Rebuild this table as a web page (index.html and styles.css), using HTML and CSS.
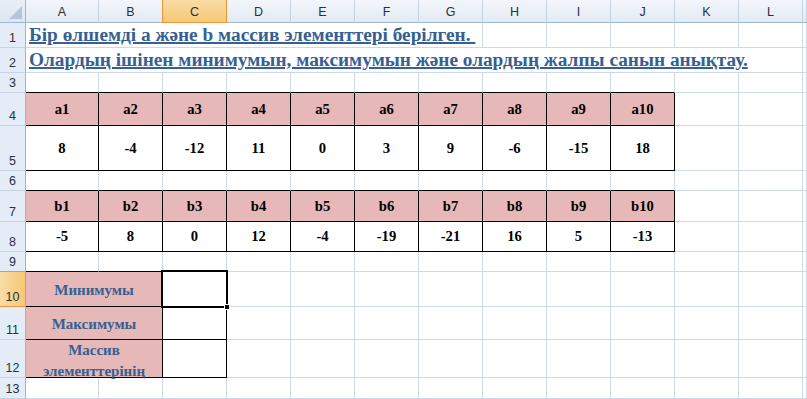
FILE: index.html
```html
<!DOCTYPE html>
<html>
<head>
<meta charset="utf-8">
<link rel="stylesheet" href="styles.css">
</head>
<body>
<div class="sheet">
  <div class="row hh">
    <div class="corner"><span class="tri"></span></div>
    <div class="ch">A</div><div class="ch">B</div><div class="ch sel">C</div><div class="ch">D</div><div class="ch">E</div><div class="ch">F</div><div class="ch">G</div><div class="ch">H</div><div class="ch">I</div><div class="ch">J</div><div class="ch">K</div><div class="ch">L</div><div class="ch"></div>
  </div>
  <div class="row h25">
    <div class="rh">1</div>
    <div class="c title s7"><span>Бір өлшемді а және b массив элементтері берілген. </span></div>
    <div class="c"></div><div class="c"></div><div class="c"></div><div class="c"></div><div class="c"></div><div class="c"></div>
  </div>
  <div class="row h25">
    <div class="rh">2</div>
    <div class="c title s12"><span>Олардың ішінен минимумын, максимумын және олардың жалпы санын анықтау.</span></div>
    <div class="c"></div>
  </div>
  <div class="row h20">
    <div class="rh">3</div>
    <div class="c tb"></div><div class="c tb"></div><div class="c tb"></div><div class="c tb"></div><div class="c tb"></div><div class="c tb"></div><div class="c tb"></div><div class="c tb"></div><div class="c tb"></div><div class="c tb"></div>
    <div class="c"></div><div class="c"></div><div class="c"></div>
  </div>
  <div class="row h33">
    <div class="rh">4</div>
    <div class="c hd">a1</div><div class="c hd">a2</div><div class="c hd">a3</div><div class="c hd">a4</div><div class="c hd">a5</div><div class="c hd">a6</div><div class="c hd">a7</div><div class="c hd">a8</div><div class="c hd">a9</div><div class="c hd">a10</div>
    <div class="c"></div><div class="c"></div><div class="c"></div>
  </div>
  <div class="row h45">
    <div class="rh">5</div>
    <div class="c val">8</div><div class="c val">-4</div><div class="c val">-12</div><div class="c val">11</div><div class="c val">0</div><div class="c val">3</div><div class="c val">9</div><div class="c val">-6</div><div class="c val">-15</div><div class="c val">18</div>
    <div class="c"></div><div class="c"></div><div class="c"></div>
  </div>
  <div class="row h20">
    <div class="rh">6</div>
    <div class="c tb"></div><div class="c tb"></div><div class="c tb"></div><div class="c tb"></div><div class="c tb"></div><div class="c tb"></div><div class="c tb"></div><div class="c tb"></div><div class="c tb"></div><div class="c tb"></div>
    <div class="c"></div><div class="c"></div><div class="c"></div>
  </div>
  <div class="row h31">
    <div class="rh">7</div>
    <div class="c hd">b1</div><div class="c hd">b2</div><div class="c hd">b3</div><div class="c hd">b4</div><div class="c hd">b5</div><div class="c hd">b6</div><div class="c hd">b7</div><div class="c hd">b8</div><div class="c hd">b9</div><div class="c hd">b10</div>
    <div class="c"></div><div class="c"></div><div class="c"></div>
  </div>
  <div class="row h30">
    <div class="rh">8</div>
    <div class="c val">-5</div><div class="c val">8</div><div class="c val">0</div><div class="c val">12</div><div class="c val">-4</div><div class="c val">-19</div><div class="c val">-21</div><div class="c val">16</div><div class="c val">5</div><div class="c val">-13</div>
    <div class="c"></div><div class="c"></div><div class="c"></div>
  </div>
  <div class="row h20">
    <div class="rh">9</div>
    <div class="c tb"></div><div class="c tb"></div><div class="c tb"></div>
    <div class="c"></div><div class="c"></div><div class="c"></div><div class="c"></div><div class="c"></div><div class="c"></div><div class="c"></div><div class="c"></div><div class="c"></div><div class="c"></div>
  </div>
  <div class="row h35">
    <div class="rh sel">10</div>
    <div class="c lbl s2">Минимумы</div>
    <div class="c box active"><span class="cursor"></span><span class="handle"></span></div>
    <div class="c"></div><div class="c"></div><div class="c"></div><div class="c"></div><div class="c"></div><div class="c"></div><div class="c"></div><div class="c"></div><div class="c"></div><div class="c"></div>
  </div>
  <div class="row h33">
    <div class="rh">11</div>
    <div class="c lbl s2">Максимумы</div>
    <div class="c box"></div>
    <div class="c"></div><div class="c"></div><div class="c"></div><div class="c"></div><div class="c"></div><div class="c"></div><div class="c"></div><div class="c"></div><div class="c"></div><div class="c"></div>
  </div>
  <div class="row h38">
    <div class="rh">12</div>
    <div class="c lbl s2 two">Массив элементтерінің</div>
    <div class="c box"></div>
    <div class="c"></div><div class="c"></div><div class="c"></div><div class="c"></div><div class="c"></div><div class="c"></div><div class="c"></div><div class="c"></div><div class="c"></div><div class="c"></div>
  </div>
  <div class="row h21">
    <div class="rh">13</div>
    <div class="c"></div><div class="c"></div><div class="c"></div><div class="c"></div><div class="c"></div><div class="c"></div><div class="c"></div><div class="c"></div><div class="c"></div><div class="c"></div><div class="c"></div><div class="c"></div><div class="c"></div>
  </div>
</div>
</body>
</html>
```
FILE: styles.css
```css
* { box-sizing: border-box; }
html, body { margin: 0; padding: 0; background: #fff; }
body { width: 807px; height: 399px; overflow: hidden; }

.sheet { display: flex; flex-direction: column; }

.row {
  display: grid;
  grid-template-columns: 26px 73px repeat(11, 64px) 1fr;
  grid-template-rows: minmax(0, 1fr);
  flex-shrink: 0;
}
.hh { height: 23px; }
.h20 { height: 20px; }
.h21 { height: 21px; }
.h25 { height: 25px; }
.h30 { height: 30px; }
.h31 { height: 31px; }
.h33 { height: 33px; }
.h35 { height: 35px; }
.h38 { height: 38px; }
.h45 { height: 45px; }

.row > div { min-height: 0; min-width: 0; }

.corner {
  position: relative;
  background: linear-gradient(#e9eff7, #dde6f1);
  border-right: 1px solid #9eb6ce;
  border-bottom: 1px solid #9eb6ce;
}
.tri {
  position: absolute;
  right: 3px;
  bottom: 3px;
  width: 0;
  height: 0;
  border-left: 13px solid transparent;
  border-bottom: 13px solid #b6c6da;
}

.ch {
  display: flex;
  align-items: center;
  justify-content: center;
  font-family: "Liberation Sans", Arial, sans-serif;
  font-size: 12.5px;
  color: #27313c;
  background: linear-gradient(#f3f6fb, #e3eaf4);
  border-right: 1px solid #c5d2e1;
  border-bottom: 1px solid #9eb6ce;
  padding-top: 1px;
}
.ch.sel {
  background: linear-gradient(#f9dca6, #f5c874);
  border-right: 1px solid #f29536;
  border-left: 1px solid #f29536;
  border-bottom: 1px solid #f29536;
  margin-left: -1px;
}

.rh {
  display: flex;
  align-items: flex-end;
  justify-content: center;
  font-family: "Liberation Sans", Arial, sans-serif;
  font-size: 12.5px;
  color: #27313c;
  background: #e4ecf7;
  border-right: 1px solid #9eb6ce;
  border-bottom: 1px solid #c5d2e1;
  padding-bottom: 2px;
}
.rh.sel {
  background: linear-gradient(90deg, #f9dca6, #f5c874);
  border-bottom: 1px solid #f29536;
  border-right: 1px solid #f29536;
  border-top: 1px solid #f29536;
  margin-top: -1px;
}

.c {
  border-right: 1px solid #d0d7e5;
  border-bottom: 1px solid #d0d7e5;
  font-family: "Liberation Serif", "Times New Roman", serif;
  font-weight: bold;
  color: #000;
}

.s2 { grid-column: span 2; }
.s7 { grid-column: span 7; }
.s12 { grid-column: span 12; }

.title {
  display: flex;
  align-items: flex-end;
  padding-left: 3px;
  padding-bottom: 1px;
  font-size: 19.3px;
  color: #376092;
  white-space: nowrap;
  overflow: visible;
}
.title span {
  white-space: pre;
  text-decoration: underline;
  text-decoration-thickness: 2px;
  text-underline-offset: 1px;
  line-height: 22px;
}

.tb { border-bottom-color: #000; }

.hd, .val {
  display: flex;
  align-items: center;
  justify-content: center;
  font-size: 14.67px;
  border-right-color: #000;
  border-bottom-color: #000;
}
.hd { background: #e6b8b7; }
.val { background: #fff; }

.lbl {
  display: flex;
  align-items: center;
  justify-content: center;
  text-align: center;
  background: #e6b8b7;
  color: #376092;
  font-size: 15px;
  line-height: 21px;
  padding-top: 2px;
  border-right-color: #000;
  border-bottom-color: #000;
}
.lbl.two { padding-top: 4px; }

.box {
  border-right-color: #000;
  border-bottom-color: #000;
}
.active { position: relative; }
.cursor {
  position: absolute;
  left: -2px;
  top: -2px;
  right: -2px;
  bottom: -2px;
  border: 2px solid #000;
  box-shadow: inset 0 0 0 1px #fff;
}
.handle {
  position: absolute;
  right: -4px;
  bottom: -4px;
  width: 6px;
  height: 6px;
  background: #000;
  border: 1px solid #fff;
}
```
